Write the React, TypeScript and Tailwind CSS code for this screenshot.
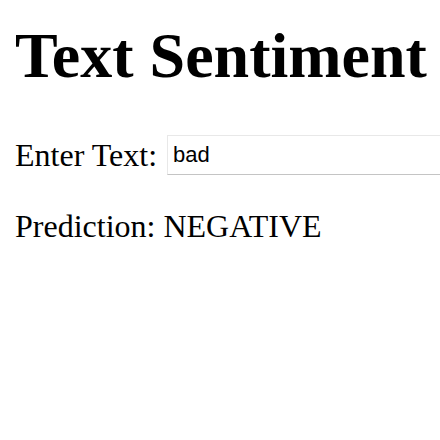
export default function App() {
  return (
    <div className="min-h-[440px] overflow-hidden bg-white px-[15px] pt-[19px] text-black font-['Liberation_Serif',serif]">
      <h1 className="text-[64px] font-bold leading-[1.15] whitespace-nowrap">Text Sentiment</h1>
      <div className="mt-[42px] flex items-center">
        <label className="shrink-0 whitespace-nowrap text-[32px] leading-none">Enter Text:</label>
        <input
          defaultValue="bad"
          className="ml-[10px] h-[40px] w-[300px] shrink-0 border border-[#e8e8e8] border-b-[#c4c4c4] px-[5px] text-[22px] text-black font-['Liberation_Sans',sans-serif] outline-none"
        />
      </div>
      <p className="mt-[35px] whitespace-nowrap text-[32px] leading-none">Prediction: NEGATIVE</p>
    </div>
  );
}
